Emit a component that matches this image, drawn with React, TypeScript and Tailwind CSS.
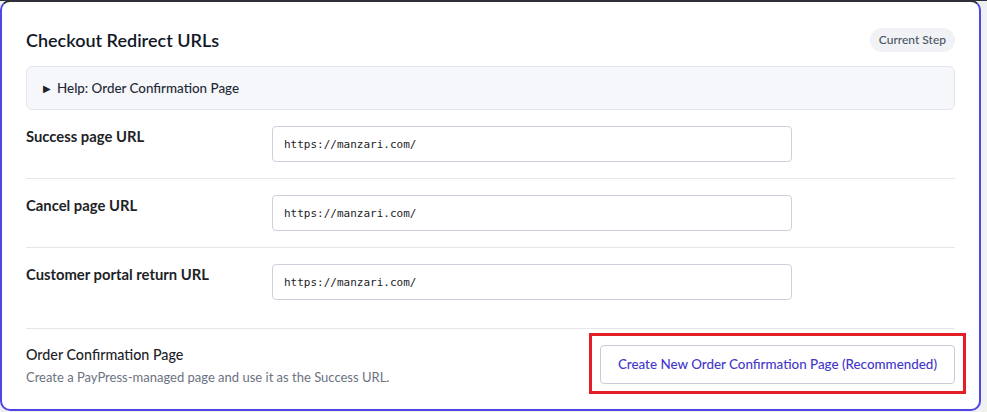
const urlFields = [
  { label: 'Success page URL', value: 'https://manzari.com/' },
  { label: 'Cancel page URL', value: 'https://manzari.com/' },
  { label: 'Customer portal return URL', value: 'https://manzari.com/' },
];

function UrlRow({ label, value, last }: { label: string; value: string; last?: boolean }) {
  return (
    <div className={`flex items-start py-[16px] ${last ? '' : 'border-b border-[#e5e7eb]'}`}>
      <label className="w-[246px] shrink-0 text-[14.8px] font-bold leading-[20px] text-[#1d2327]">{label}</label>
      <input
        readOnly
        value={value}
        className="h-[36px] w-[520px] rounded-[4px] border border-[#cdd1dc] bg-white px-[11px] text-[11px] text-[#1d2327] outline-none"
        style={{ fontFamily: '"DejaVu Sans Mono", monospace' }}
      />
    </div>
  );
}

export default function App() {
  return (
    <div className="h-[412px] w-[987px] bg-[#f0f0f1] font-['Lato',sans-serif]">
      <div className="h-px bg-[#2f2f3a]" />
      <div className="-mt-px h-[411px] w-[981px] rounded-[10px] border-2 border-[#5046e5] border-t-[#2f2f3a] bg-white px-[24px] pt-[24px]">
        {/* Header */}
        <div className="flex items-center justify-between">
          <h2 className="text-[18px] font-semibold leading-[28px] text-[#111827]">Checkout Redirect URLs</h2>
          <span className="rounded-full bg-[#f1f2f6] px-[9px] py-[3px] text-[12px] font-medium text-[#4b5563]">Current Step</span>
        </div>

        {/* Help disclosure */}
        <div className="mt-[12px] flex h-[44px] items-center rounded-[6px] border border-[#e3e6ee] bg-[#f6f7fa] px-[16px]">
          <span className="mr-[6px] text-[10px] text-[#1d2327]">▶</span>
          <span className="text-[13.4px] font-medium text-[#1f2937]">Help: Order Confirmation Page</span>
        </div>

        {/* URL fields */}
        <div>
          {urlFields.map((f, i) => (
            <UrlRow key={f.label} label={f.label} value={f.value} last={i === urlFields.length - 1} />
          ))}
        </div>

        {/* Order confirmation page */}
        <div className="mt-[12px] flex items-start justify-between border-t border-[#e5e7eb] pt-[16px]">
          <div>
            <div className="text-[14.3px] font-medium leading-[20px] text-[#1d2327]">Order Confirmation Page</div>
            <div className="mt-[3px] text-[13px] leading-[18px] text-[#6b7280]">
              Create a PayPress-managed page and use it as the Success URL.
            </div>
          </div>
          <div className="relative">
            <button className="h-[39px] rounded-[4px] border border-[#c9cbd9] bg-white px-[17px] text-[13.4px] font-medium text-[#4338ca]">
              Create New Order Confirmation Page (Recommended)
            </button>
            {/* highlight frame around the action */}
            <div className="pointer-events-none absolute -bottom-[10px] -left-[11px] -right-[11px] -top-[12px] border-[3px] border-[#e41e26]" />
          </div>
        </div>
      </div>
    </div>
  );
}
